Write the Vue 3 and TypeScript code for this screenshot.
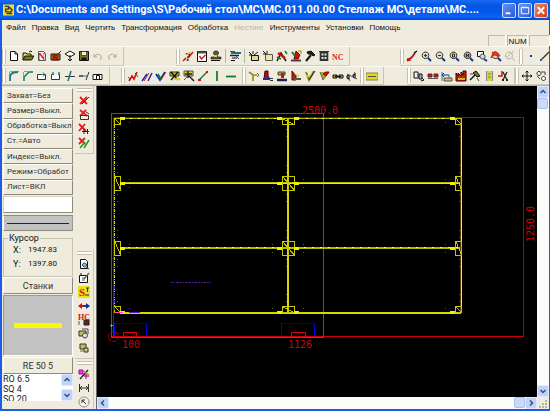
<script setup lang="ts">
import { h, ref } from 'vue'

/** A stroke or filled outline: path data, fill, stroke, stroke width. */
type PathShape = [d: string, fill: string, stroke?: string, width?: number]
/** A letter placed inside an icon. */
interface Letter { text: string; x: number; y: number; fill: string; size: number }
type Shape = PathShape | Letter

const K = '#111'
const R = '#d01010'
const Y = '#d8cc20'
const G = '#108030'
const B = '#1030b0'
const T = '#107878'
const O = '#77771c'
const N = 'none'

const lens = (inner: string, tint = '#e4dfa4'): Shape[] => [
  ['M8 8l3 3', N, B, 2],
  ['M5.500 2a3.300 3.300 0 1 0 .01 0z', tint, '#333', 1],
  [inner, N, '#333', 1],
]

const icons: Record<string, Shape[]> = {
  new: [['M2.5 1.500h4.500l2.500 2.500v6.500h-7z', '#fff', K], ['M7 1.500v2.500h2.500', N, K]],
  open: [['M1 10V3h3l1 1h4v2', '#e8e070', K], ['M1 10l2-4h9l-2.500 4z', O, K], ['M7 2q2-2 3 0', N, K]],
  nc: [['M2.500 1.500h5l2 2v7h-7z', '#fff', '#555'], { text: 'N', x: 2, y: 9.5, fill: '#f01010', size: 10 }],
  openRed: [['M1 10V4h9v6z', '#c09020', K], ['M3 5h5v5h-5z', '#e01010', '#a00000'], ['M4 6l3 3M8 4l3-3', N, '#403010']],
  import: [['M1 4l5-3 5 3-5 3z', '#fff', K], ['M6 5v6M4 9l2 2 2-2', N, K]],
  save: [['M1.500 1.500h9v9h-9z', O, K], ['M3.500 1.500h5v4h-5z', '#eee', K, .6], ['M3.500 7.500h5v3h-5z', K]],
  undo: [['M2 4v3h3M2 7q4-5 7-1q1 2-1 4', N, '#aaa69a', 1]],
  redo: [['M10 4v3h-3M10 7q-4-5-7-1q-1 2 1 4', N, '#aaa69a', 1]],
  help: [{ text: '?', x: 3, y: 10.5, fill: '#222', size: 12 }, ['M1 11l3-3M6 8l5-6', N, R, 1.5], ['M5 5l3-3', N, Y, 1.5]],
  check: [['M1.500 1.500h9v10h-9z', '#fff', K], ['M2 2.500h8', N, '#555', 2], ['M3.500 6l2 3 4-4', N, R, 1.4]],
  stamp: [['M6 1a2 2 0 0 1 1 4l1 2h3v2H1V7h3l1-2a2 2 0 0 1 1-4z', '#555', K, .6], ['M4 6h3', N, Y, 2], ['M1 10.500h9', N, K]],
  pens: [['M2 3h10', N, '#187080', 2], ['M1 1.500h5', N, R], ['M1 5.500h9', N, '#222', 1.5], ['M3 8h5M2 10.500h4', N, K, 1], ['M7 6l3 3', N, '#448']],
  spark: [['M3.500 5.500h7v5h-7z', '#ded98c', K], ['M1 2l4 4M5 1v3M1 5h3M6 5l4-3', N, K]],
  folder: [['M3.500 4.500h7v6h-7z', '#ece6a0', '#555'], ['M1 1l3 3M5 1v3M1 4h3', N, K]],
  cutRed: [['M1 11L5 3l5 8', N, K, 1.5], ['M2 3l7 5', N, R, 2.5], ['M1 7l4 2M9 1l2 3', N, G, 1.5]],
  toolRed: [['M6 1l4 4-2 4H4z', R, '#700'], ['M2 2l3 4', N, G, 2], ['M1 10.500h10', N, '#444', 2], ['M8 1h3v3', N, '#c0b020', 1.5]],
  hammer: [['M2 11l5-6', N, K, 2], ['M3 2l4-1 4 4-2 1-2-2-3 0z', '#222', K]],
  film: [['M1 1h10v10H1z', '#333'], ['M3.500 3.500h2v2h-2zM6.500 3.500h2v2h-2zM3.500 7h2v2h-2zM6.500 7h2v2h-2z', '#ddd'], ['M1.500 2v9M10.500 2v9', N, '#eee', .7]],
  ncText: [{ text: 'NC', x: 0, y: 9.5, fill: '#f02020', size: 8 }],
  brush: [['M2 10l4-3 3-4', N, '#b01818', 1.8], ['M2 8l-1 3 4-1', R, R], ['M8 3l3-2', N, K, 1.500]],
  zoomIn: lens('M4 5.500h3M5.500 4v3'),
  zoomOut: lens('M4 5.500h3'),
  zoomPage: lens('M4.500 4h2v3h-2z', '#ddd84c'),
  zoomAll: lens('M4 4l3 3M7 4L4 7M4 5.500h3', '#a6a868'),
  zoomWin: [['M1.500 1.500h6v5h-6z', '#fff', K], ['M6.500 4a2.500 2.500 0 1 0 .01 0z', '#cdd', '#333'], ['M8 9l3 2', N, B, 2]],
  zoomRed: [...lens('M3 5h4'), ['M1 8l4-6 5 4M2 2l7 5', N, '#e82010', 1.5]],
  zoomOff: [['M5 2a3.500 3.500 0 1 0 .01 0zM8 8l3 3M3 7l7-6', N, '#b5b1a4', 1]],
  dot: [['M5 5h2v2H5z', B]],
  line: [['M2 10l8-8', N, '#333', 1.3], ['M1 9h2v2H1z', '#2468a8']],
  fillet: [['M2 11V7q0-5 8-5', N, T, 1.8], ['M1.500 2v9M2 1.500h9', N, '#777', .7]],
  chamfer: [['M2 11V7l5-5h4', N, T, 1.5], ['M1.500 2v5M2 1.500h4', N, '#777', .7]],
  box: [['M1.500 4.500h8v5h-8z', '#fff', '#333'], ['M5 4.500h3M7 2.500l2 2-2 2', N, T]],
  boxOpen: [['M4 4.500H1.500v5h8v-5H8', '#fff', '#333'], ['M3 2v3M9 2v3', N, T, 1.3]],
  trim: [['M1 6.500h10', N, '#333', 1], ['M7 1L4 11', N, T, 1.500]],
  extend: [['M1 6h4', N, '#333', 1.5], ['M5 6h4', N, T, 1], ['M11 2L8 10', N, '#333', 1]],
  pocket: [['M1 9.500V4.500h9v5zM4.500 9V5.500h3V9', '#fff', K]],
  zigRed: [['M2 11l3-5 2 3 3-7', N, R, 1.6], ['M1 7l3 3M8 3l3 4', N, '#356', 1]],
  lines: [['M1 11l5-7M7 11l4-8', N, B, 1.5], ['M3 11l5-8', N, R, 1]],
  vee: [['M1 4l4 6 5-8', N, B, 1.8], ['M3 4l3 5', N, G, 1.5], ['M6 10l5-8', N, R, .8]],
  mapA: [['M1 2h9v4H1z', '#c8c030', '#333'], ['M2 2l7 8M9 2L2 10', N, K, 1.3], ['M5 9h6', N, Y, 2]],
  mapB: [['M1 1h9v5H1z', '#d5cc20', '#555'], ['M2 4h7M5 1v7M6 6l5 5', N, '#222', 1.5], ['M1 10l3-3', N, G, 1]],
  lineGR: [['M2 10l8-8', N, G, 1.4], ['M1 9h3v2H1zM9 1h2v2H9z', R]],
  vert: [['M6 1v10', N, G, 1.8]],
  horiz: [['M1 6.500h10', N, G, 1.8]],
  branch: [['M1 2l4 3h4M5 5v6', N, '#948d24', 1.7], ['M9 3l2 2-2 2', N, '#444', .8]],
  drill: [['M3 1h3v5l2 3H2z', '#b01010', '#500'], ['M1 9h7', N, B, 2], ['M8 8.500h3M8 10.500h3', N, '#333', 1]],
  mill: [['M2 2h7v3H2z', '#b5aa20', '#444'], ['M5 3h3v5H5z', R], ['M1 10h10', N, '#224', 2.5]],
  drillNc: [['M2 1l4 5v4H2z', '#c02010', '#600'], ['M4 9h7', N, '#555', 2], ['M6 5l3 1', N, Y, 1.5]],
  check2: [['M2 2l3 8 5-9', N, '#847e20', 2], ['M2 6h4', N, Y, 2], ['M5 10l6-9', N, K, .8]],
  penRed: [['M2 2l3 8 6-8', '#b0a520', '#666'], ['M5 4l3-2h3L8 6z', R, '#a00']],
  chain: [['M1 5h4v3H1zM7 5h4v3H7z', '#b1aa24', K], ['M3 6.500h6', N, K, 1.3]],
  gears: [['M3 5a2 2 0 1 0 .01 4zM9 4a2 2 0 1 0 .01 4z', '#ddd', K, 1.2], ['M1 4l10 5M8 2l2 2M3 9l1 2', N, '#555', 1]],
  yellow: [['M0 3h12v7H0z', '#e8dc20', '#858040'], ['M2 6.500h8', N, '#555', 1.2]],
  panels: [['M1 2h4v6H1z', '#eee', K], ['M6 4h3v5H6z', '#aac', K], ['M9 8l2 2-3 1', N, K]],
  redBoxes: [['M1 4h4v3H1zM7 4h4v3H7z', '#ba2020', '#622'], ['M1 8.500h10', N, '#555', 1]],
  dims: [['M1 2v9M8 5v6', N, '#46a', 1], ['M1 5h7M3 3L1 5l2 2', N, B, 1], ['M3 8h8v3H3z', '#d0c060', '#555']],
  factory: [['M1 11V3l2 3V3l3 3V2l2 3V1h3v10z', '#c02010', '#400'], ['M3 9h7', N, '#cfba20', 2]],
  pin: [['M1 10l5-5', N, K, 1.5], ['M4 3l3-2 4 5-3 1z', O, K], ['M1 4h3M8 8l2 3', N, '#444']],
  film2: [['M3 1h7v10H3z', '#dbd52c'], ['M3.500 1v10M9.500 1v10', N, '#888', 1], ['M5 4h3M5 7h3', N, '#666', .7]],
  scissors: [['M1 6h4V1', N, R, 1.500], ['M6 2l4 8M10 2L6 10', N, '#222', 1.3], ['M5 10h2M9 10h2', N, '#222', 2]],
  move: [['M6 1v10M1 6h10M4.500 2.500L6 1l1.500 1.500M4.500 9.500L6 11l1.500-1.500M2.500 4.500L1 6l1.500 1.500M9.500 4.500L11 6 9.500 7.500', N, K, 1]],
  rotate: [['M4 1.500a2 2 0 1 0 .01 0zM8.500 6.500a2 2 0 1 0 .01 0z', '#fff', '#222', 1], ['M6 2h4v3M2 6l3 3', N, '#444', 1]],
  delSnap: [['M2 2l7 7M9 2L2 9', N, '#e02020', 1.8], ['M4 9l7-7', N, '#333', 1]],
  delDim: [['M2 1l7 6M8 1L2 7', N, '#e02020', 1.8], ['M2.500 6.500h8v4h-8z', N, '#333'], ['M8 3l3 2', N, '#333']],
  delPts: [['M1 1l7 7M7 1L1 8', N, '#e02020', 1.8], ['M4 8.500h7M6 6v5M9.500 6v5', N, '#222', 1]],
  delMill: [['M1 1l6 6M7 1L1 7', N, '#e02020', 1.8], ['M2 11l5-6M6 11l5-8', N, '#20a020', 1.5]],
  preview: [['M2.500 1.500h5l2 2v7h-7z', '#fff', K], ['M6.500 5a2 2 0 1 0 .01 0zM8 9l3 2', '#9bc', '#245', 1]],
  note: [['M1.500 3.500h8v7h-8z', '#fff', K], ['M4 6h3M4 8h3', N, '#555'], ['M6 7l5-6', N, '#666', 1.4], ['M3 1v3', N, K]],
  sheet: [['M0 0h12v12H0z', '#e8e020'], { text: 'S', x: 1, y: 10, fill: '#e01010', size: 11 }, ['M8 2h3M9.500 2v4M7 9h4', N, '#333', 1]],
  swap: [['M0 6l4-3v6z', R], ['M3 6h3', N, R, 2], ['M12 6l-4-3v6z', '#1030a0'], ['M6 6h3', N, '#1030a0', 2]],
  hc: [{ text: 'НС', x: 0, y: 6, fill: R, size: 8 }, ['M6 6h5v5H6z', '#622', '#222'], ['M1 7v4', N, '#888', 1.5]],
  layers: [['M1 3h7v5H1z', '#c4be58', '#333'], ['M4 1h6v5', N, '#444'], ['M7 5a2.500 2.500 0 1 0 .01 0z', '#ddd', '#333']],
  layers2: [['M2 2h6v5H2z', '#c4be58', '#333'], ['M6 6h4v4H6z', '#d8d060', '#333'], ['M2 9h3', N, '#666']],
  axes: [['M1 2h4v4H1z', '#e040d0', '#a0a'], ['M2 11l8-9', N, '#222', 1.3], ['M6 8h5M8 6v5', N, '#b028a0', 1.3], ['M6 3l5 4', N, '#a49a20', 1.5]],
  width: [['M1.500 2v8M10.500 2v8M2 6h8M4 4L2 6l2 2M8 4l2 2-2 2', N, '#333', 1]],
  radius: [['M6 1a5 5 0 1 0 .01 0z', '#f5f2e6', '#888', 1], ['M8 8L4 4v3M4 4h3', N, '#333', 1]],
}

const Glyph = (props: { name: string }) =>
  h('svg', { viewBox: '0 0 12 12', width: 12, height: 12, 'aria-hidden': 'true' },
    icons[props.name].map((s) => Array.isArray(s)
      ? h('path', { d: s[0], fill: s[1], stroke: s[2] ?? 'none', 'stroke-width': s[3] ?? 1 })
      : h('text', { x: s.x, y: s.y, fill: s.fill, 'font-size': s.size, 'font-weight': 700, 'font-family': 'Liberation Serif, serif' }, s.text)))
Glyph.props = ['name']

const menu = ['Файл', 'Правка', 'Вид', 'Чертить', 'Трансформация', 'Обработка', 'Нестинг', 'Инструменты', 'Установки', 'Помощь']

const fileRow = [
  ['new', 'open', 'nc', 'openRed', 'import', 'save', 'undo', 'redo'],
  ['help', 'check', 'stamp', '|', 'pens', '|', 'spark', 'folder', 'cutRed', 'toolRed', 'hammer', 'film', 'ncText'],
  ['brush', 'zoomIn', 'zoomOut', 'zoomPage', 'zoomAll', 'zoomWin', 'zoomRed', 'zoomOff'],
  ['dot', 'line'],
]
const editRow = [
  ['fillet', 'chamfer', 'box', 'boxOpen', 'trim', 'extend', 'pocket'],
  ['zigRed', 'lines', 'vee', 'mapA', 'mapB', 'lineGR', 'vert', 'horiz'],
  ['branch', 'drill', 'mill', 'drillNc', 'check2', 'penRed', 'chain', 'gears'],
  ['yellow'],
  ['panels', 'redBoxes', 'dims', 'factory', 'pin', 'film2', 'scissors'],
  ['move', 'rotate'],
]
const sideBars = [
  ['delSnap', 'delDim', 'delPts', 'delMill'],
  ['preview', 'note', 'sheet', 'swap', 'hc', 'layers', 'layers2'],
  ['axes', 'width', 'radius'],
]
const modes = ['Захват=Без', 'Размер=Выкл.', 'Обработка=Выкл', 'Ст.=Авто', 'Индекс=Выкл.', 'Режим=Обработ', 'Лист=ВКЛ']
const tools = ['RO 6.5', 'SQ 4', 'SO 20']

const command = ref('')
const tool = ref('')

/** Shelf joints: x centre, y centre and extent of the bracket drawn there. */
const rows = [{ y: 118, up: 0, down: 6 }, { y: 183, up: 7, down: 7 }, { y: 248, up: 7, down: 7 }, { y: 312, up: 6, down: 0 }]
const cols = [{ x: 114, left: 0, right: 6 }, { x: 288, left: 6, right: 6 }, { x: 461, left: 6, right: 0 }]
const joints = rows.flatMap((r) => cols.map((c) => ({ ...r, ...c })))
const bracket = (j: (typeof joints)[number]) =>
  `M${j.x - j.left + .5} ${j.y - j.up + .5}h${j.left + j.right}v${j.up + j.down}h${-j.left - j.right}z` +
  `M${j.x - j.left + 1} ${j.y - j.up + 1}l${j.left + j.right} ${j.up + j.down}M${j.x + .5} ${j.y - j.up}v${j.up + j.down}`
const wedge = (j: (typeof joints)[number]) =>
  (j.left ? `M${j.x - 11} ${j.y - 1}h5v3h-5z` : '') + (j.right ? `M${j.x + 6} ${j.y - 1}h5v3h-5z` : '')
const specks = (j: (typeof joints)[number]) => {
  const out: string[] = []
  for (const v of [-18, -11, 11, 18]) if ((v < 0 ? j.up : j.down)) out.push(`M${j.x + (j.left ? -2 : 3)} ${j.y + v}h1v1h-1z`)
  for (const u of [-16, 15]) if ((u < 0 ? j.left : j.right)) {
    if (j.down) out.push(`M${j.x + u} ${j.y + 4}h1v1h-1z`)
    if (j.up) out.push(`M${j.x + u} ${j.y - 4}h1v1h-1z`)
  }
  return out.join('')
}
</script>

<template>
  <div class="window">
    <header class="title">
      <svg class="app-icon" viewBox="0 0 12 12" aria-hidden="true">
        <path d="M0 0h12v12H0z" fill="#f0dc28" />
        <path d="M2 2h4v3H3v3h5M7 3l3 3-2 3M4 10h6" fill="none" stroke="#333" stroke-width="1.5" />
      </svg>
      <h1>C:\Documents and Settings\S\Рабочий стол\МС\МС.011.00.00 Стеллаж МС\детали\МС....</h1>
      <button class="win" aria-label="Свернуть"><svg viewBox="0 0 13 13"><path d="M3 9.500h5" stroke="#fff" stroke-width="2" /></svg></button>
      <button class="win" aria-label="Развернуть"><svg viewBox="0 0 13 13"><path d="M2.500 3.500h8v6.500h-8zM2.500 3h8" fill="none" stroke="#fff" /></svg></button>
      <button class="win close" aria-label="Закрыть"><svg viewBox="0 0 13 13"><path d="M3 3l7 7M10 3l-7 7" stroke="#fff" stroke-width="2" /></svg></button>
    </header>

    <nav class="menu">
      <button v-for="m in menu" :key="m" :disabled="m === 'Нестинг'">{{ m }}</button>
    </nav>

    <div class="status"><span class="caps"></span><span class="num">NUM</span><span class="last"></span></div>

    <div class="tools file-row">
      <div v-for="(bar, i) in fileRow" :key="i" class="bar">
        <i class="grip"></i>
        <template v-for="(name, k) in bar" :key="k">
          <i v-if="name === '|'" class="sep"></i>
          <button v-else class="tool" :aria-label="name"><Glyph :name="name" /></button>
        </template>
      </div>
    </div>
    <div class="tools edit-row">
      <div v-for="(bar, i) in editRow" :key="i" class="bar">
        <i class="grip"></i>
        <button v-for="name in bar" :key="name" class="tool" :aria-label="name"><Glyph :name="name" /></button>
      </div>
    </div>

    <main class="work">
      <aside class="panel">
        <div class="modes"><button v-for="m in modes" :key="m" class="raised">{{ m }}</button></div>
        <input v-model="command" class="command" aria-label="Команда" />
        <div class="line-type"><i></i></div>
        <fieldset class="cursor">
          <legend>Курсор</legend>
          <dl><dt>X:</dt><dd>1947.83</dd><dt>Y:</dt><dd>1397.80</dd></dl>
        </fieldset>
        <button class="raised wide">Станки</button>
        <div class="preview"><i></i></div>
        <button class="raised wide">RE 50 5</button>
        <div class="list">
          <select v-model="tool" size="3" aria-label="Инструмент">
            <option v-for="t in tools" :key="t">{{ t }}</option>
          </select>
          <div class="list-scroll">
            <button class="arrow" aria-label="Вверх"><svg viewBox="0 0 10 10"><path d="M2.500 6L5 3.500 7.500 6" /></svg></button>
            <button class="arrow" aria-label="Вниз"><svg viewBox="0 0 10 10"><path d="M2.500 4L5 6.500 7.500 4" /></svg></button>
          </div>
        </div>
      </aside>

      <aside class="side-tools">
        <div v-for="(bar, i) in sideBars" :key="i" class="side-bar">
          <i class="grip"></i>
          <button v-for="name in bar" :key="name" class="tool" :aria-label="name"><Glyph :name="name" /></button>
        </div>
      </aside>

      <section class="view">
        <div class="drawing">
          <svg viewBox="97 86 440 311" preserveAspectRatio="xMinYMin meet" role="img" aria-label="Стеллаж">
            <g fill="none" shape-rendering="crispEdges">
              <path d="M113.500 336.500V117.500H523.500V336.500" stroke="#b00000" />
              <path d="M111 336.500h412" stroke="#d00000" />
              <path d="M111.500 113.500H323.500V337.500H111.500z" stroke="#8c4c0c" />
              <path d="M114 118.500H461" stroke="#b4b400" />
              <path d="M114 118.500H461" stroke="#ffff50" stroke-dasharray="2 6" />
              <path d="M114.500 119V312" stroke="#d8d800" stroke-dasharray="3 1 1 1" />
              <path d="M120 183H461M120 248H461" stroke="#b8b800" stroke-width="2" />
              <path d="M120 183.500H461M125 313H461" stroke="#f0f000" />
              <path d="M120 247.500H461" stroke="#ffff40" stroke-dasharray="2 6" />
              <path d="M125 313H461" stroke="#d8d800" stroke-width="2" />
              <path d="M288 119V312" stroke="#d8d800" stroke-width="2" />
              <path d="M461.500 119V313" stroke="#f8f800" />
              <path d="M460.500 119V313" stroke="#604000" />
              <g v-for="(j, i) in joints" :key="i">
                <path :d="bracket(j)" stroke="#c8c800" />
                <path :d="wedge(j)" fill="#f0f000" />
                <path :d="specks(j)" fill="#606000" />
              </g>
              <path d="M114.500 286V312" stroke="#5020c0" stroke-dasharray="3 4" />
              <path d="M115 312.500h8" stroke="#ff40d0" />
              <path d="M129 312.500h11" stroke="#6010e0" />
              <path d="M171 282.500h40" stroke="#5a1c90" stroke-dasharray="2 1 1 1 3 1" />
              <path d="M114 323.500h32M282 323.500h32" stroke="#000090" />
              <path d="M114.500 323v13M146.500 323v13M281.500 323v13M314.500 323v13" stroke="#0000e0" />
              <path d="M123.500 336v-3.500h13v3.500M291.500 336v-3.500h14v3.500" stroke="#d80000" />
            </g>
            <circle cx="113.500" cy="336.500" r="5" fill="none" stroke="#c00000" stroke-dasharray="4 1" />
            <path d="M110 325.500h3M111.500 324v3" stroke="#e08010" />
            <g class="dim">
              <text x="302" y="114">2500.0</text>
              <text x="122" y="348">100</text>
              <text x="288" y="348">1126</text>
              <text transform="translate(534 242) rotate(-90)">1250.0</text>
            </g>
          </svg>
        </div>
        <div class="scroll v">
          <button class="arrow" aria-label="Вверх"><svg viewBox="0 0 10 10"><path d="M2.500 6L5 3.500 7.500 6" /></svg></button>
          <i class="thumb"></i>
          <button class="arrow end" aria-label="Вниз"><svg viewBox="0 0 10 10"><path d="M2.500 4L5 6.500 7.500 4" /></svg></button>
        </div>
        <div class="scroll h">
          <button class="arrow" aria-label="Влево"><svg viewBox="0 0 10 10"><path d="M6 2.500L3.500 5 6 7.500" /></svg></button>
          <i class="thumb end"></i>
          <button class="arrow" aria-label="Вправо"><svg viewBox="0 0 10 10"><path d="M4 2.500L6.500 5 4 7.500" /></svg></button>
        </div>
        <div class="corner"><svg viewBox="0 0 12 12"><path d="M8 3h2v2H8zM5 6h2v2H5zM8 6h2v2H8zM2 9h2v2H2zM5 9h2v2H5zM8 9h2v2H8z" fill="#b8b4a0" /></svg></div>
      </section>
    </main>
  </div>
</template>

<style>
body { margin: 0; background: #efebdd; }
</style>

<style scoped>
* { box-sizing: border-box; }
.window {
  display: grid;
  grid-template-rows: 20px 15px 11px 20px 19px minmax(0, 1fr);
  grid-template-columns: minmax(0, 1fr);
  height: 100vh;
  border: solid #1c5ce8;
  border-width: 0 1px 2px 2px;
  background: #efebdd;
  color: #111;
  font: 8px/12px "Liberation Sans", sans-serif;
}
button { font: inherit; color: inherit; margin: 0; padding: 0; border: 0; background: none; }
svg { display: block; }
i { display: block; }

.title {
  display: flex;
  align-items: center;
  gap: 2px;
  margin-left: -2px;
  margin-right: -1px;
  padding: 0 2px 0 3px;
  background: linear-gradient(#1a6cf4, #0456e4 25%, #0458ea 60%, #0a64fa 85%, #0444c0);
}
.app-icon { flex: none; width: 11px; height: 12px; }
.title h1 {
  flex: 1;
  min-width: 0;
  margin: 0;
  overflow: hidden;
  white-space: nowrap;
  color: #fff;
  font: bold 11px/18px Roboto, sans-serif;
}
.win { flex: none; width: 14px; height: 15px; border: 1px solid #c8dcff; border-radius: 2px; background: linear-gradient(135deg, #6a94f0, #2858d8); }
.win svg { width: 12px; height: 13px; }
.win.close { background: linear-gradient(135deg, #f08868, #d03c14); }

.menu { display: flex; align-items: center; gap: 6px; padding-left: 4px; }
.menu button { white-space: nowrap; }
.menu button:disabled { color: #bab6a8; }

.status { display: flex; justify-content: flex-end; gap: 2px; }
.status span { border: solid #c0bcac; border-width: 1px 0 0 1px; box-shadow: 1px 0 #fff; line-height: 11px; text-align: center; }
.caps { width: 17px; }
.num { width: 20px; }
.last { width: 20px; }

.tools { display: grid; border-top: 1px solid #fbf9f2; }
.file-row { grid-template-columns: 174px 224px 119px minmax(0, 1fr); }
.edit-row { grid-template-columns: 119px 121px 118px 47px 108px minmax(0, 1fr); }
.bar { display: flex; align-items: center; justify-self: start; padding-right: 4px; border-right: 1px solid #c8c4b4; border-bottom: 1px solid #d0ccbc; overflow: hidden; }
.bar:last-child { justify-self: stretch; border-right: 0; padding: 0; }
.grip { flex: none; width: 4px; height: 15px; margin: 0 1px 0 0; border: solid #c4c0b0; border-width: 0 1px; background: #fff; }
.tool { flex: none; display: grid; place-items: center; width: 14px; height: 16px; }
.sep { flex: none; width: 1px; height: 14px; margin: 0 2px; background: #b8b4a4; }

.work { display: grid; grid-template-columns: 71px 23px minmax(0, 1fr); grid-template-rows: minmax(0, 1fr); min-height: 0; border-top: 1px solid #b4b0a0; }

.panel { display: flex; flex-direction: column; min-width: 0; padding: 2px 0 0 1px; font: 9px/12px Roboto, sans-serif; }
.modes { flex: none; display: grid; grid-template-columns: minmax(0, 1fr); grid-template-rows: repeat(7, 1fr); height: 107px; font-size: 8px; }
.raised { overflow: hidden; white-space: nowrap; text-align: left; padding-left: 3px; border: 1px solid; border-color: #fff #8e8a7c #8e8a7c #fff; color: #333; }
.wide { flex: none; height: 17px; padding: 0; text-align: center; }
.command { flex: none; width: 100%; height: 17px; margin-top: 1px; padding: 0 3px; border: 1px solid; border-color: #d8d4c4 #8e8a7c #8e8a7c #d8d4c4; background: #fff; font: inherit; }
.line-type { flex: none; display: grid; align-items: center; height: 16px; margin-top: 2px; padding: 0 3px; border: 1px solid; border-color: #8e8a7c #999 #8e8a7c #fff; background: #c2c2c2; }
.line-type i { height: 1px; background: #224; }
.cursor { flex: none; height: 44px; min-width: 0; margin: 2px 0 0; padding: 0 2px; border: 1px solid #c8c4b4; }
.cursor legend { margin-left: 2px; padding: 0 1px; line-height: 11px; }
.cursor dl { display: grid; grid-template-columns: 15px 1fr; row-gap: 2px; margin: 0; padding-left: 7px; }
.cursor dd { margin: 0; font-size: 8px; }
.preview { flex: none; display: grid; place-items: center; height: 61px; margin: 1px 0; border: 1px solid; border-color: #999 #fff #fff #999; background: #c2c2c2; }
.preview i { width: 70%; height: 5px; background: #f8f800; }
.list { flex: none; display: flex; height: 27px; background: #fff; }
.list select { flex: 1; min-width: 0; height: 27px; padding: 0; border: 0; outline: 0; overflow: hidden; scrollbar-width: none; background: #fff; color: #222; font: 9px/10px Roboto, sans-serif; }
.list option { min-height: 10px; height: 10px; padding: 0; line-height: 10px; }
.list-scroll { display: flex; flex-direction: column; justify-content: space-between; width: 12px; }

.arrow { display: grid; place-items: center; flex: none; width: 12px; height: 12px; border: 1px solid #dfe8fc; border-radius: 2px; background: #c0d2fa; }
.arrow svg { width: 10px; height: 10px; }
.arrow path { fill: none; stroke: #34507c; stroke-width: 1.5; }

.side-tools { display: flex; flex-direction: column; padding-left: 2px; }
.side-bar { display: flex; flex-direction: column; align-items: center; width: 19px; border: solid #ccc8b8; border-width: 0 1px 1px 0; padding-bottom: 3px; }
.side-bar:nth-child(2) { margin-top: auto; }
.side-bar:last-child { border-bottom: 0; padding: 0; }
.side-bar .grip { width: 15px; height: 4px; margin: 2px 0; border-width: 1px 0; }
.side-bar .tool { width: 16px; height: 14px; }

.view { display: grid; grid-template-columns: minmax(0, 1fr) 12px; grid-template-rows: minmax(0, 1fr) 12px; min-width: 0; min-height: 0; border-left: 1px solid #666; }
.drawing { min-width: 0; min-height: 0; overflow: hidden; background: #000; }
.drawing svg { width: 100%; height: 100%; }
.dim { fill: #d00000; font: 10px "DejaVu Sans Mono", monospace; }
.scroll { display: flex; background: #fdfcf8; }
.scroll.v { flex-direction: column; }
.thumb { flex: none; width: 11px; height: 11px; border: 1px solid #a8c0f0; border-radius: 2px; background: #cad9fc; }
.scroll.v .end { margin-top: auto; }
.scroll.h .end { margin-left: auto; }
.corner svg { width: 12px; height: 12px; }
</style>
